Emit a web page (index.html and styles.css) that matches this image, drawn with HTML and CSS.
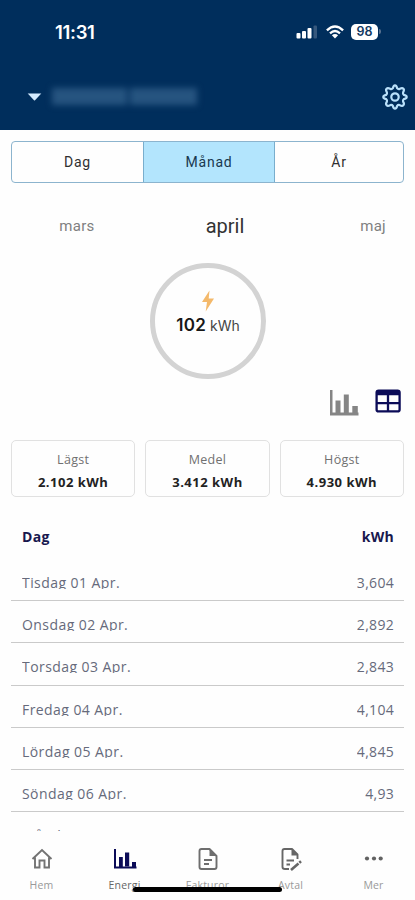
FILE: index.html
```html
<!DOCTYPE html>
<html lang="sv">
<head>
<meta charset="utf-8">
<title>Energi</title>
<link rel="stylesheet" href="styles.css">
</head>
<body>
<div class="app">
  <header class="header">
    <div class="status">
      <span class="clock">11:31</span>
      <svg class="signal" width="22" height="15" viewBox="0 0 22 15"><g fill="#fff"><rect x="0.5" y="9" width="4" height="5.5" rx="1"/><rect x="6" y="7" width="4" height="7.5" rx="1"/><rect x="11.5" y="4" width="4" height="10.500" rx="1"/></g><rect x="17.500" y="1.500" width="3.500" height="13" rx="1" fill="#36587d"/></svg>
      <svg class="wifi" width="18" height="14" viewBox="0 0 18 14" fill="none" stroke="#fff" stroke-width="2.300"><path d="M.9 5.300Q9-2.400 17.100 5.300"/><path d="M4 8.300Q9 3.700 14 8.300"/><path d="M9 13.500L5.900 10.300Q9 7.800 12.100 10.300Z" fill="#fff" stroke="none"/></svg>
      <span class="battery">98</span><i class="battery-tip"></i>
    </div>
    <div class="account">
      <svg width="15" height="8" viewBox="0 0 15 8"><path d="M.7.500H14.300L8 7.300Q7.500 7.800 7 7.300Z" fill="#d3ebff"/></svg>
      <span class="name"><i class="first"></i><i class="last"></i></span>
      <svg class="gear" width="26" height="26" viewBox="0 0 26 26" fill="none" stroke="#b9e0fa" stroke-width="2.200" stroke-linejoin="round"><path d="M10.900 4.200Q11.400 1.300 13 1.300T15.100 4.200Q16 5.400 17.700 4.900Q20.200 3.300 21.300 4.700Q22.700 5.800 21.100 8.300Q20.600 10 21.800 10.900Q24.700 11.400 24.700 13T21.800 15.100Q20.600 16 21.100 17.700Q22.700 20.200 21.300 21.300Q20.200 22.700 17.700 21.100Q16 20.600 15.100 21.800Q14.600 24.700 13 24.700T10.900 21.800Q10 20.600 8.300 21.100Q5.800 22.700 4.700 21.300Q3.300 20.200 4.900 17.700Q5.400 16 4.200 15.100Q1.300 14.600 1.300 13T4.200 10.900Q5.400 10 4.900 8.300Q3.300 5.800 4.700 4.700Q5.800 3.300 8.300 4.900Q10 5.400 10.900 4.200Z"/><circle cx="13" cy="13" r="3.700"/></svg>
    </div>
  </header>
  <main class="content">
    <div class="segments"><span>Dag</span><span class="on">Månad</span><span>År</span></div>
    <div class="months"><span class="prev">mars</span><span class="current">april</span><span class="next">maj</span></div>
    <div class="ring">
      <svg width="14" height="22" viewBox="0 0 14 22"><path d="M8.500.5L1 12H6L4.700 21.500L13 8.500H7.700Z" fill="#f4b96b"/></svg>
      <p><b>102</b> kWh</p>
    </div>
    <div class="views">
      <svg width="30" height="28" viewBox="0 0 30 28" fill="#858585"><path d="M1 1H3.500V23.500H29.500V26.500H1Z"/><rect x="6.500" y="11.500" width="5" height="13"/><rect x="14.800" y="5.500" width="5" height="19"/><rect x="23.300" y="17" width="5.500" height="8"/></svg>
      <svg width="26" height="24" viewBox="0 0 26 24" fill="none" stroke="#0b0b57" stroke-width="2.300"><rect x="1.600" y="1.600" width="23" height="20.800" rx="2"/><path d="M2 4H24" stroke-width="4.500"/><path d="M2 14.200H24M13 5V22"/></svg>
    </div>
    <div class="stats">
      <div class="stat"><span>Lägst</span><b>2.102 kWh</b></div>
      <div class="stat"><span>Medel</span><b>3.412 kWh</b></div>
      <div class="stat"><span>Högst</span><b>4.930 kWh</b></div>
    </div>
    <div class="thead"><span>Dag</span><span>kWh</span></div>
    <div class="rows">
      <div class="row"><span>Tisdag 01 Apr.</span><span class="val">3,604</span></div>
      <div class="row"><span>Onsdag 02 Apr.</span><span class="val">2,892</span></div>
      <div class="row"><span>Torsdag 03 Apr.</span><span class="val">2,843</span></div>
      <div class="row"><span>Fredag 04 Apr.</span><span class="val">4,104</span></div>
      <div class="row"><span>Lördag 05 Apr.</span><span class="val">4,845</span></div>
      <div class="row"><span>Söndag 06 Apr.</span><span class="val">4,93</span></div>
      <div class="row"><span>Måndag 07 Apr.</span><span class="val">4,138</span></div>
    </div>
  </main>
  <nav class="tabs">
    <div class="tab"><svg width="24" height="24" viewBox="0 0 24 24" fill="none" stroke="#737373" stroke-width="1.900"><path d="M2.500 12L12 3L21.500 12M5 10.500V20.500H9.500V13.500H14.500V20.500H19V10.500"/></svg><span>Hem</span></div>
    <div class="tab active"><svg width="24" height="24" viewBox="0 0 24 24" fill="#0b0b57"><path d="M1 2H3V19.500H23.500V21.500H1Z"/><rect x="6" y="10" width="3.800" height="10"/><rect x="12" y="5.500" width="4.200" height="14"/><rect x="19" y="15" width="4" height="5"/></svg><span>Energi</span></div>
    <div class="tab"><svg width="24" height="24" viewBox="0 0 24 24" fill="none" stroke="#6e6e6e" stroke-width="1.900"><path d="M13.500 2H5.500Q3.500 2 3.500 4V20Q3.500 22 5.500 22H18.500Q20.500 22 20.500 20V9Z" stroke-linejoin="round"/><path d="M13.500 2V9H20.500Z" fill="#6e6e6e" stroke="none"/><path d="M8 13H16M8 17H13"/></svg><span>Fakturor</span></div>
    <div class="tab"><svg width="24" height="24" viewBox="0 0 24 24" fill="none" stroke="#666" stroke-width="1.900"><path d="M10 22H6Q3.500 22 3.500 20V4Q3.500 2 5.500 2H13L18.500 7.500V12" stroke-linejoin="round"/><path d="M12.500 2V8.500H19Z" fill="#666" stroke="none"/><path d="M7.500 13.500H15M7.500 17.500H11"/><path d="M12 23L19.500 16.500" stroke-width="2.600"/><path d="M20.300 15.700L22 14.200" stroke-width="2.600"/></svg><span>Avtal</span></div>
    <div class="tab"><svg width="24" height="24" viewBox="0 0 24 24" fill="#626262"><circle cx="5" cy="11.500" r="2.100"/><circle cx="12" cy="11.500" r="2.100"/><circle cx="18.700" cy="11.500" r="2.100"/></svg><span>Mer</span></div>
    <i class="home-indicator"></i>
  </nav>
</div>
</body>
</html>
```
FILE: styles.css
```css
* { box-sizing: border-box; }
body { margin: 0; background: #fff; font-family: "Open Sans", sans-serif; }
p { margin: 0; }
.app { width: 415px; height: 900px; display: flex; flex-direction: column; overflow: hidden; background: #fefefe; }
.header { height: 130px; flex: none; background: #002e5c; }
.status { height: 63px; display: flex; align-items: center; padding: 0 34px 0 55px; }
.clock { flex: 1; color: #fff; font: 600 18.500px Inter, sans-serif; letter-spacing: -0.3px; }
.signal { margin-right: 8px; }
.wifi { margin-right: 7px; }
.battery { width: 27px; height: 16px; border-radius: 5px; background: #fff; color: #11375f; font: 600 12.500px/16px Inter, sans-serif; text-align: center; }
.battery-tip { width: 2px; height: 5px; margin-left: 1px; border-radius: 0 2px 2px 0; background: #58718f; }
.account { height: 67px; display: flex; align-items: center; padding: 0 7px 0 27px; }
.name { flex: 1; display: flex; gap: 3px; padding-left: 10px; filter: blur(3px); }
.name i { height: 17px; background: #265480; }
.first { width: 75px; }
.last { width: 67px; }
.content { height: 701px; flex: none; overflow: hidden; padding: 11px 11px 0; }
.segments { height: 42px; display: grid; grid-template-columns: 131px 132px 1fr; border: 1px solid #8cb4ce; border-radius: 4px; overflow: hidden; font: 400 14px/40px Roboto, sans-serif; letter-spacing: 0.8px; color: #303030; text-align: center; }
.segments .on { background: #b3e5fd; border: solid #79aecd; border-width: 0 1px; color: #18384f; }
.months { height: 80px; display: grid; grid-template-columns: 132px 164px 97px; align-items: center; padding-top: 5px; font: 15px/20px Roboto, sans-serif; letter-spacing: 0.3px; color: #808080; text-align: center; }
.current { font-size: 20px; letter-spacing: 0; color: #333; }
.next { text-align: right; padding-right: 18px; }
.ring { width: 116px; height: 116px; margin-left: 139px; border: 5px solid #d3d3d3; border-radius: 50%; text-align: center; padding-top: 22px; font: 14px/22px Inter, sans-serif; color: #454545; }
.ring svg { display: block; margin: 0 auto; }
.ring p { margin-top: 2px; }
.ring b { font-size: 17px; font-weight: 600; letter-spacing: 0.3px; color: #171717; }
.views { height: 61px; display: flex; justify-content: flex-end; align-items: flex-start; gap: 16px; padding: 10px 3px 0 0; }
.stats { display: grid; grid-template-columns: repeat(3, 1fr); gap: 10px; }
.stat { height: 57px; display: flex; flex-direction: column; align-items: center; border: 1.500px solid #e1e1e1; border-radius: 5px; padding-top: 8px; color: #707070; font-size: 12.500px; line-height: 22px; letter-spacing: 0.3px; }
.stat b { color: #222; font-size: 13px; letter-spacing: 0.5px; }
.thead { height: 62px; display: flex; justify-content: space-between; padding: 0 10px 0 11px; font-size: 14px; font-weight: 700; line-height: 79px; color: #18184e; letter-spacing: 0.3px; }
.row { height: 42.200px; display: flex; justify-content: space-between; padding: 13px 10px 0 11px; border-bottom: 1.500px solid #cacaca; font-size: 14px; line-height: 21px; letter-spacing: 0.430px; color: #666a7b; }
.row span { height: 17px; overflow: hidden; }
.row .val { height: 21px; letter-spacing: 0.3px; }
.tabs { flex: 1; display: grid; grid-template-columns: repeat(5, 83px); position: relative; padding-top: 16px; }
.tab { display: flex; flex-direction: column; align-items: center; font-size: 10.500px; line-height: 14px; letter-spacing: 0.2px; color: #999; }
.tab span { margin-top: 7px; }
.active { color: #666; }
.home-indicator { position: absolute; left: 133px; top: 56px; width: 149px; height: 5px; border-radius: 3px; background: #000; }
```
